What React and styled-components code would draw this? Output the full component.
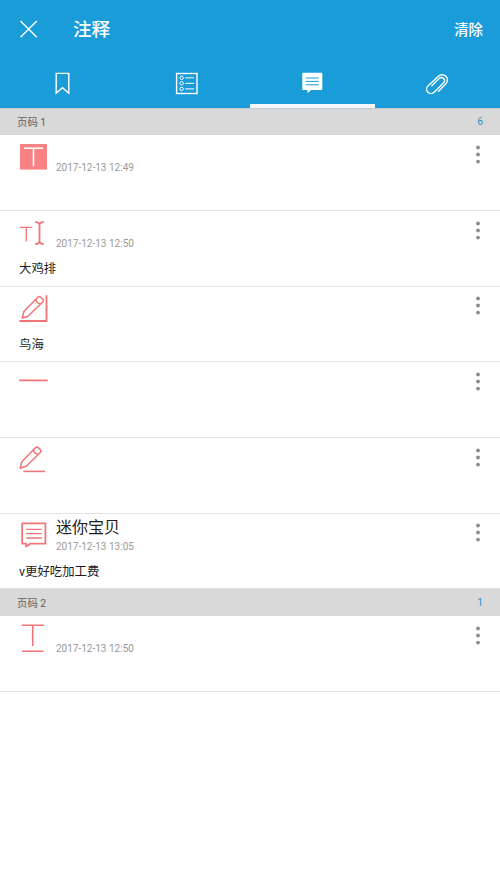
import React, { useState } from "react";
import styled, { createGlobalStyle } from "styled-components";

const GlobalStyle = createGlobalStyle`
  * {
    box-sizing: border-box;
  }
  body {
    margin: 0;
    background-color: #fff;
    font-family: Roboto, "Noto Sans CJK SC", sans-serif;
  }
`;

const Page = styled.div`
  display: flex;
  flex-direction: column;
  width: 500px;
  min-height: 888px;
  background-color: #fff;
`;

const Header = styled.header`
  height: 108.4px;
  background-color: #1a9cd9;
  color: #fff;
`;

const TitleBar = styled.div`
  display: flex;
  align-items: center;
  height: 58px;
  padding: 1px 17px 0 19px;
`;

const IconButton = styled.button`
  display: flex;
  padding: 0;
  border: none;
  background: none;
  cursor: pointer;
`;

const CloseIcon = styled.svg`
  width: 20px;
  height: 20px;
  margin-top: -1px;
  stroke: #fff;
  stroke-width: 1.4;
`;

const Title = styled.h1`
  flex: 1;
  margin: 1px 0 0 34px;
  font-size: 18.6px;
  font-weight: 500;
  line-height: 28px;
`;

const ClearButton = styled.button`
  padding: 2px 0 0;
  border: none;
  background: none;
  color: #fff;
  font-family: inherit;
  font-size: 14.4px;
  font-weight: 500;
  line-height: 20px;
  cursor: pointer;
`;

const Tabs = styled.nav`
  display: grid;
  grid-template-columns: repeat(4, 1fr);
  height: 50px;
`;

const Tab = styled.button`
  display: flex;
  justify-content: center;
  padding: 13px 0.6px 0 0;
  border: none;
  border-bottom: 4px solid ${(props) => (props.$active ? "#f4f6f7" : "transparent")};
  background: none;
  cursor: pointer;
`;

const SectionHeader = styled.div`
  display: flex;
  justify-content: space-between;
  align-items: center;
  height: 27px;
  padding: 0 17px 1px;
  background-color: #d9d9d9;
  box-shadow: ${(props) => (props.$first ? "inset 0 1px 0 #c6cdd0" : "none")};
  color: #606060;
  font-size: 10.4px;
`;

const Count = styled.span`
  color: #2f93c8;
`;

const Row = styled.div`
  display: flex;
  flex-direction: column;
  height: 75.66px;
  padding: 8px 19px 0 18px;
  border-bottom: 1px solid #e2e2e2;
`;

const RowTop = styled.div`
  display: flex;
  height: 32px;
`;

const Info = styled.div`
  display: flex;
  flex: 1;
  flex-direction: column;
  justify-content: flex-end;
  padding-left: 8.4px;
`;

const Author = styled.div`
  margin-bottom: 1.6px;
  color: #1c1c1c;
  font-size: 16px;
  line-height: 20px;
`;

const DateText = styled.div`
  color: #999;
  font-size: 10px;
  line-height: 14px;
`;

const Note = styled.div`
  padding: 8px 0 0 1px;
  color: #1c1c1c;
  font-size: 12.4px;
  line-height: 19px;
`;

const MarkIcon = styled.svg`
  flex: none;
  width: 30px;
  height: 30px;
  margin-left: -0.4px;
  fill: none;
  stroke: #f07478;
  stroke-width: 1.6;
`;

const MoreIcon = styled.svg`
  width: 6px;
  height: 20px;
  margin-top: 1.6px;
  fill: #8c8c8c;
`;

const TabIcon = styled.svg`
  width: 24px;
  height: 24px;
  fill: none;
  stroke: #fff;
  stroke-width: 1.4;
`;

const tabIcons = {
  bookmark: <path d="M6.2 2.4h12.6v19.9l-6.3-5.5-6.3 5.5z" />,
  outline: (
    <>
      <rect x="1.6" y="2.5" width="20.4" height="20" />
      <g strokeWidth="1">
        <circle cx="6.6" cy="6.8" r="1.7" />
        <circle cx="6.6" cy="12.3" r="1.7" />
        <circle cx="6.6" cy="17.9" r="1.7" />
        <path d="M10.1 6.8h9M10.1 12.3h9M10.1 17.9h9" />
      </g>
    </>
  ),
  comment: (
    <>
      <path
        d="M3.1 1.8h18.4q.8 0 .8.8v15.6q0 .8-.8.8H11.2l-3.8 3.3V19H3.1q-.8 0-.8-.8V2.6q0-.8.8-.8z"
        fill="#fff"
        stroke="none"
      />
      <path d="M5.8 7h13M5.8 10.4h13M5.8 13.8h13" stroke="#1a9cd9" strokeWidth="1" />
    </>
  ),
  attachment: (
    <path
      d="M13.5 20.2l7.4-7.4a5.3 5.3 0 0 0-7.5-7.5L2.9 15a4.2 4.2 0 0 0 6.2 6.2L18.6 11.8a3.1 3.1 0 0 0-4.4-4.4l-7.3 7.3"
      strokeLinecap="round"
    />
  ),
};

const markIcons = {
  highlight: (
    <>
      <rect x="2" y="1" width="27" height="25.6" fill="#f98284" stroke="none" />
      <path d="M6 5.2h19M15.5 5.2v18" stroke="#fff" />
    </>
  ),
  replace: (
    <>
      <path d="M2 8.4h12.4M8.3 8.4v14.2" strokeWidth="1.3" />
      <path
        d="M17.2 2.9q4.3 .4 4.3 3.4v15.6q0 2.8-4.3 3.3M25.8 2.9q-4.3 .4-4.3 3.4v15.6q0 2.8 4.3 3.3"
        strokeWidth="1.8"
      />
    </>
  ),
  area: (
    <>
      <path d="M28.5 .3v26M1.4 26h27.8" strokeWidth="1.8" />
      <path
        d="M4.3 23l1.5-6.5L19.8 2.3q1.5-1.4 3 0l1.9 1.8q1.4 1.5 0 2.9L10 21.2zM18 4.3q.2 4.2 4.8 4.4"
        strokeWidth="1.5"
        strokeLinejoin="round"
      />
    </>
  ),
  line: <path d="M1.2 10.4h28.4" strokeWidth="1.8" />,
  pencil: (
    <>
      <path
        d="M2.2 22.2l1.6-6.5L17.4 1.8q1.5-1.4 3 0l1.9 1.8q1.4 1.5 0 2.9L8.2 20.2zM15.5 3.8q.3 4 4.9 4.4"
        strokeWidth="1.5"
        strokeLinejoin="round"
      />
      <path d="M5.3 25.4h21.8" />
    </>
  ),
  comment: (
    <>
      <path d="M4.2 1.4h23.2v20.2H12.6l-4.4 3v-3h-4z" strokeWidth="1.8" strokeLinejoin="round" />
      <path d="M8.2 7.4h15.6M8.2 11.7h15.6M8.2 16h15.6" strokeWidth="1.3" />
    </>
  ),
  underline: <path d="M3.6 1.2h22.3M14.7 1.2v20.9M4 27.2h21.5" />,
};

const tabs = ["bookmark", "outline", "comment", "attachment"];

const sections = [
  {
    page: 1,
    items: [
      { id: 1, type: "highlight", date: "2017-12-13 12:49" },
      { id: 2, type: "replace", date: "2017-12-13 12:50", note: "大鸡排" },
      { id: 3, type: "area", note: "鸟海" },
      { id: 4, type: "line" },
      { id: 5, type: "pencil" },
      {
        id: 6,
        type: "comment",
        author: "迷你宝贝",
        date: "2017-12-13 13:05",
        note: "v更好吃加工费",
      },
    ],
  },
  {
    page: 2,
    items: [{ id: 7, type: "underline", date: "2017-12-13 12:50" }],
  },
];

function Annotation({ item }) {
  return (
    <Row>
      <RowTop>
        <MarkIcon viewBox="0 0 30 30">{markIcons[item.type]}</MarkIcon>
        <Info>
          {item.author && <Author>{item.author}</Author>}
          {item.date && <DateText>{item.date}</DateText>}
        </Info>
        <IconButton type="button">
          <MoreIcon viewBox="0 0 6 20">
            <circle cx="3" cy="2.5" r="1.9" />
            <circle cx="3" cy="9.5" r="1.9" />
            <circle cx="3" cy="16.6" r="1.9" />
          </MoreIcon>
        </IconButton>
      </RowTop>
      {item.note && <Note>{item.note}</Note>}
    </Row>
  );
}

function App() {
  const [activeTab, setActiveTab] = useState("comment");

  return (
    <Page>
      <GlobalStyle />
      <Header>
        <TitleBar>
          <IconButton type="button">
            <CloseIcon viewBox="0 0 20 20">
              <path d="M1.5 2l16.3 16.3M17.8 2L1.5 18.3" />
            </CloseIcon>
          </IconButton>
          <Title>注释</Title>
          <ClearButton type="button">清除</ClearButton>
        </TitleBar>
        <Tabs>
          {tabs.map((name) => (
            <Tab
              key={name}
              type="button"
              $active={activeTab === name}
              onClick={() => setActiveTab(name)}
            >
              <TabIcon viewBox="0 0 24 24">{tabIcons[name]}</TabIcon>
            </Tab>
          ))}
        </Tabs>
      </Header>
      {sections.map((section, index) => (
        <section key={section.page}>
          <SectionHeader $first={index === 0}>
            <span>页码 {section.page}</span>
            <Count>{section.items.length}</Count>
          </SectionHeader>
          {section.items.map((item) => (
            <Annotation key={item.id} item={item} />
          ))}
        </section>
      ))}
    </Page>
  );
}

export default App;
